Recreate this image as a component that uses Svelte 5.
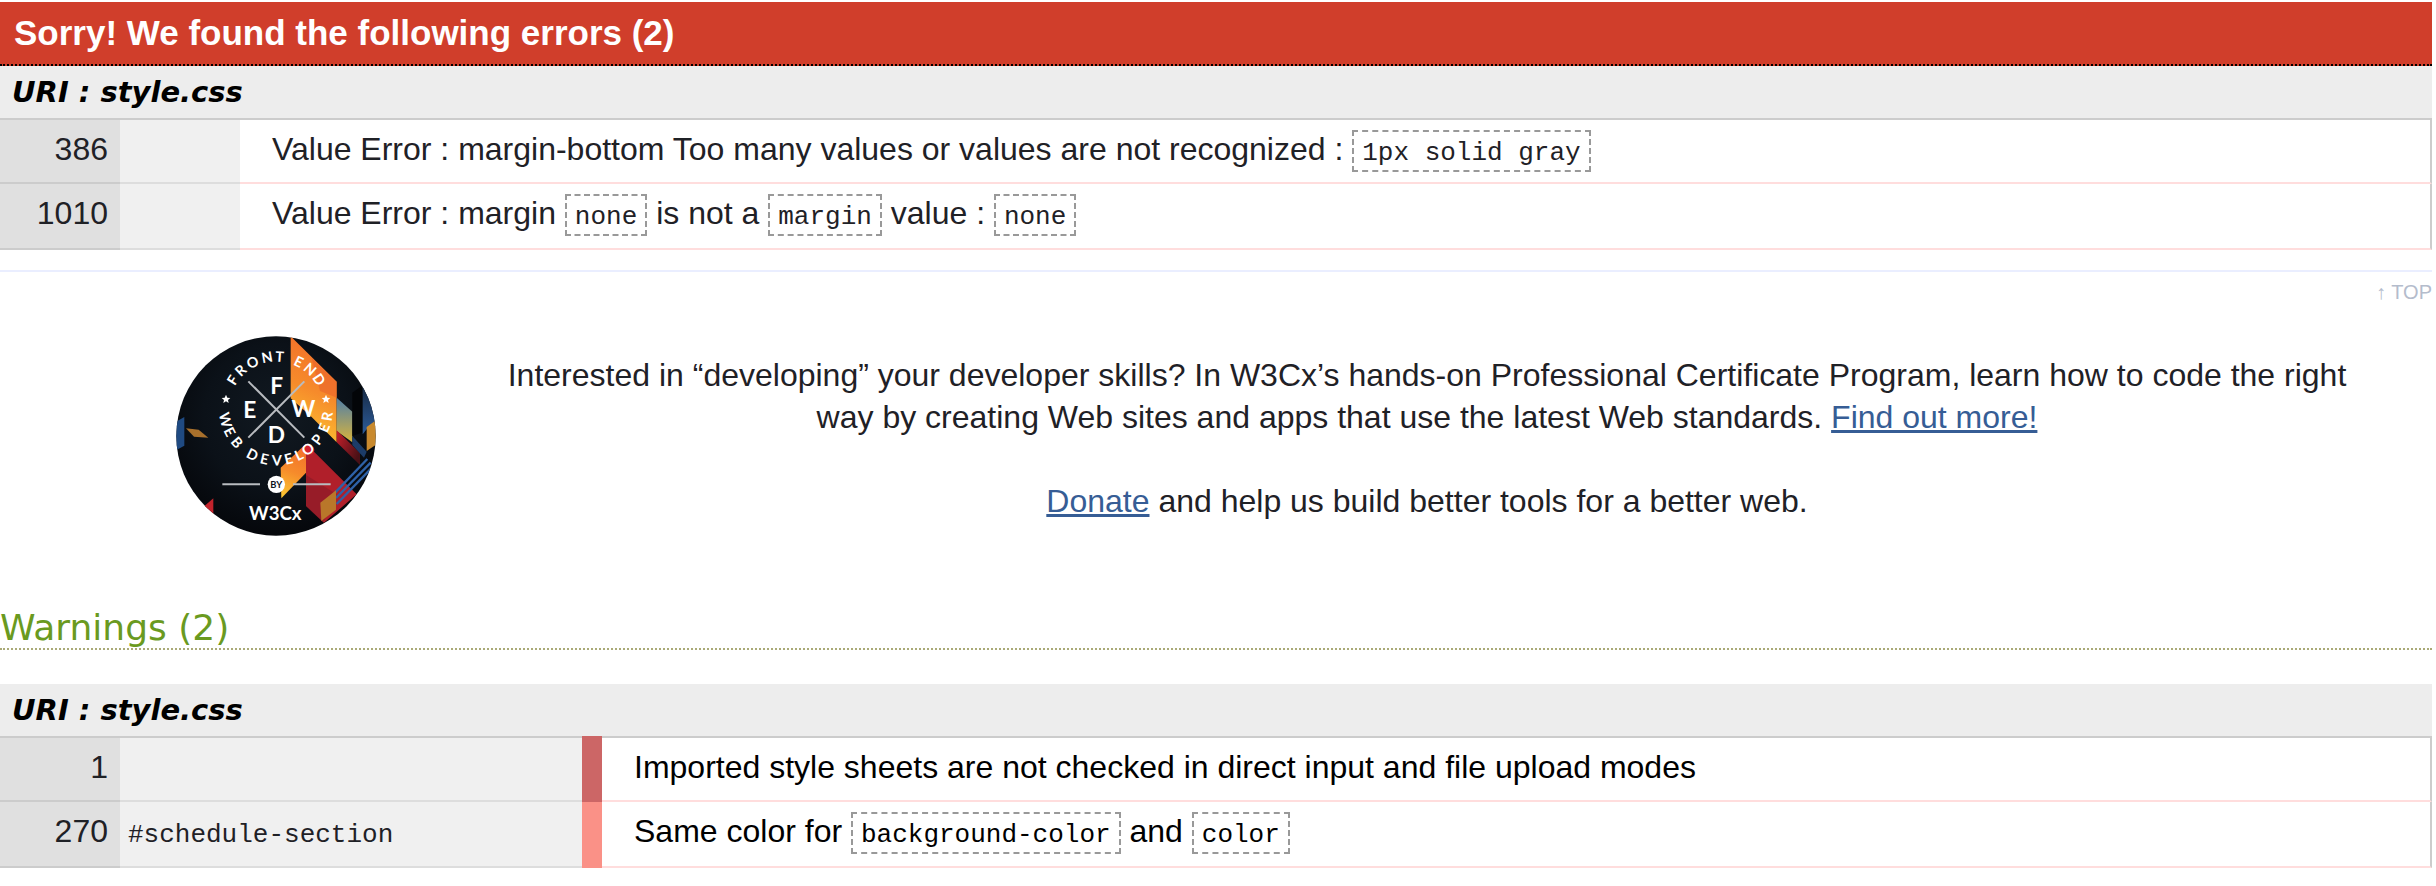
<script>
  const errors = [
    { line: 386, context: '', parts: ['Value Error : margin-bottom Too many values or values are not recognized : ', { code: '1px solid gray' }] },
    { line: 1010, context: '', parts: ['Value Error : margin ', { code: 'none' }, ' is not a ', { code: 'margin' }, ' value : ', { code: 'none' }] }
  ];
  const warnings = [
    { line: 1, context: '', level: 'high', parts: ['Imported style sheets are not checked in direct input and file upload modes'] },
    { line: 270, context: '#schedule-section', level: 'low', parts: ['Same color for ', { code: 'background-color' }, ' and ', { code: 'color' }] }
  ];

  // Badge lettering: each letter with its angle round the dial
  const upper = [['F', -57], ['R', -43], ['O', -27], ['N', -10], ['T', 4], ['E', 26], ['N', 41], ['D', 56]];
  const lower = [['W', 77], ['E', 63], ['B', 49], ['D', 27], ['E', 13], ['V', -1], ['E', -14], ['L', -26], ['O', -38], ['P', -53], ['E', -68], ['R', -81]];
</script>

{#snippet message(parts)}
  {#each parts as part}{#if part.code}<code class="boxed">{part.code}</code>{:else}{part}{/if}{/each}
{/snippet}

<main id="top">
  <section>
    <h2 class="error-title">Sorry! We found the following errors (2)</h2>
    <h3 class="uri">URI : style.css</h3>
    <table>
      <tbody>
        {#each errors as row}
          <tr>
            <td class="line">{row.line}</td>
            <td class="context">{row.context}</td>
            <td class="message">{@render message(row.parts)}</td>
          </tr>
        {/each}
      </tbody>
    </table>
  </section>

  <p class="back"><a href="#top">↑ TOP</a></p>

  <section class="promo">
    <svg class="badge" viewBox="48 45 600 600" role="img" aria-label="Front End Web Developer by W3Cx">
      <defs>
        <clipPath id="disc"><circle cx="348" cy="345" r="299" /></clipPath>
        <radialGradient id="night" cx="0.5" cy="0.4" r="0.6">
          <stop offset="0" stop-color="#111921" />
          <stop offset="0.6" stop-color="#0b1118" />
          <stop offset="1" stop-color="#05070b" />
        </radialGradient>
        <linearGradient id="flame" x1="0.5" y1="0" x2="0.3" y2="1">
          <stop offset="0" stop-color="#f26f2a" />
          <stop offset="0.5" stop-color="#f68b2b" />
          <stop offset="1" stop-color="#fcc531" />
        </linearGradient>
        <linearGradient id="steel" x1="0" y1="0" x2="0" y2="1">
          <stop offset="0" stop-color="#4f7ea8" />
          <stop offset="1" stop-color="#d9b53c" />
        </linearGradient>
        <linearGradient id="wine" x1="0" y1="0" x2="1" y2="0.6">
          <stop offset="0" stop-color="#c8202b" />
          <stop offset="1" stop-color="#4a1016" />
        </linearGradient>
        <linearGradient id="sea" x1="0" y1="0" x2="0" y2="1">
          <stop offset="0" stop-color="#16273f" />
          <stop offset="1" stop-color="#2c5b99" />
        </linearGradient>
      </defs>
      <g clip-path="url(#disc)">
        <rect x="48" y="45" width="600" height="600" fill="url(#night)" />
        <polygon points="48,302 73,288 73,374 48,388" fill="#1f4a82" />
        <polygon points="78,322 116,326 145,350 102,347" fill="#a8702c" />
        <polygon points="130,558 160,532 160,578 145,575" fill="#c3232c" />
        <polygon points="392,46 530,182 530,364 452,285 392,232" fill="url(#flame)" />
        <polygon points="455,110 530,182 530,230 480,210" fill="#e9642c" opacity="0.6" />
        <polygon points="530,230 577,272 577,364 530,330" fill="url(#steel)" />
        <polygon points="530,328 600,396 600,432 530,364" fill="url(#wine)" />
        <polygon points="577,215 605,195 620,330 577,345" fill="#030508" />
        <polygon points="608,190 650,240 650,310 620,325 608,340" fill="url(#sea)" />
        <polygon points="620,318 650,296 650,370 620,390" fill="#c98a2e" />
        <polygon points="577,345 620,392 612,410 577,372" fill="#1c3c68" />
        <polygon points="362,440 438,368 438,455 364,532" fill="url(#flame)" />
        <polygon points="438,368 590,520 492,605 438,555" fill="#b01f2a" />
        <polygon points="438,462 530,520 490,605 438,555" fill="#7e1a25" opacity="0.5" />
        <g stroke="#2e62a8" stroke-width="7">
          <path d="M526 514 L622 414" />
          <path d="M528 531 L632 425" />
          <path d="M530 549 L636 440" />
        </g>
        <polygon points="481,545 528,508 528,566 484,600" fill="#b9772a" />
        <g stroke="#b9bcc0" stroke-width="6">
          <path d="M265 181 L433 350" />
          <path d="M433 181 L265 350" />
          <path d="M187 490 H300" />
          <path d="M399 490 H512" />
        </g>
        <polygon points="198,221 202,230 211,231 204,237 206,246 198,241 190,246 192,237 185,231 194,230" fill="#fff" />
        <polygon points="498,221 502,230 511,231 504,237 506,246 498,241 490,246 492,237 485,231 494,230" fill="#fff" />
        <circle cx="448" cy="387" r="15" fill="#cf2030" />
        <circle cx="349" cy="490" r="26" fill="#fff" />
        <g class="dial">
          {#each upper as [letter, angle]}
            <text x="348" y="122" transform="rotate({angle} 348 262)">{letter}</text>
          {/each}
          {#each lower as [letter, angle]}
            <text x="348" y="433" transform="rotate({angle} 348 262)">{letter}</text>
          {/each}
        </g>
        <g class="initials">
          <text x="350" y="218">F</text>
          <text x="269" y="290">E</text>
          <text x="430" y="288">W</text>
          <text x="349" y="366">D</text>
        </g>
        <text class="by" x="349" y="500">BY</text>
        <text class="maker" x="346" y="598">W3Cx</text>
      </g>
    </svg>
    <div class="pitch">
      <p>Interested in “developing” your developer skills? In W3Cx’s hands-on Professional Certificate Program, learn how to code the right way by creating Web sites and apps that use the latest Web standards. <a href="#more">Find out more!</a></p>
      <p><a href="#donate">Donate</a> and help us build better tools for a better web.</p>
    </div>
  </section>

  <section>
    <h2 class="warning-title">Warnings (2)</h2>
    <h3 class="uri">URI : style.css</h3>
    <table class="warnings">
      <tbody>
        {#each warnings as row}
          <tr>
            <td class="line">{row.line}</td>
            <td class="context wide"><code>{row.context}</code></td>
            <td class="level {row.level}"></td>
            <td class="message">{@render message(row.parts)}</td>
          </tr>
        {/each}
      </tbody>
    </table>
  </section>
</main>

<style>
  :global(body) {
    background: #fff;
  }
  main {
    padding: 2px 4px 16px 0;
    font-family: "Liberation Sans", Arial, sans-serif;
    font-size: 32px;
    line-height: 42px;
    color: #1f2126;
  }
  h2, h3, p {
    margin: 0;
  }
  .error-title {
    padding: 10px 14px;
    border-bottom: 2px dotted #000;
    background: #d03e2b;
    color: #fff;
    font-size: 35px;
    line-height: 42px;
  }
  .uri {
    padding: 5px 12px;
    background: #ededed;
    color: #000;
    font: italic bold 29px/42px "DejaVu Sans", Verdana, sans-serif;
  }
  table {
    width: 100%;
    border-spacing: 0;
  }
  td {
    padding: 8px 0 14px;
    vertical-align: top;
    border-bottom: 2px solid #ddd;
  }
  tr:first-child td {
    padding-bottom: 12px;
    border-top: 2px solid #ccc;
  }
  td.line {
    width: 108px;
    padding-right: 12px;
    background: #e0e0e0;
    border-bottom-color: #ccc;
    text-align: right;
  }
  td.context {
    width: 112px;
    padding-left: 8px;
    background: #f0f0f0;
  }
  td.context.wide {
    width: 454px;
  }
  td.level,
  tr:first-child td.level {
    width: 20px;
    padding: 0;
    border: 0;
  }
  .high {
    background: #cc6666;
  }
  .low {
    background: #fa9187;
  }
  td.message {
    padding-left: 32px;
    border-right: 2px solid #ccc;
    border-bottom-color: #fdd;
  }
  .warnings .message {
    color: #000;
  }
  code {
    font-family: "Liberation Mono", "Courier New", monospace;
    font-size: 26px;
    line-height: 1;
  }
  .boxed {
    padding: 6px 8px 2px;
    border: 2px dashed #999;
  }
  .back {
    margin-top: 20px;
    border-top: 2px solid #eaeeff;
    font-size: 20px;
    line-height: 40px;
    text-align: right;
  }
  .back a {
    color: #b4bccc;
    text-decoration: none;
  }
  .promo {
    display: grid;
    grid-template-columns: 200px 1fr;
    column-gap: 126px;
    align-items: start;
    padding: 24px 80px 72px 176px;
  }
  .badge {
    display: block;
    width: 200px;
    height: 200px;
  }
  .badge text {
    font-family: Lato, sans-serif;
    font-weight: 700;
    fill: #fff;
    text-anchor: middle;
  }
  .badge .dial text {
    font-size: 43px;
  }
  .badge .initials text {
    font-size: 68px;
  }
  .badge .by {
    font-size: 28px;
    fill: #10161d;
  }
  .badge .maker {
    font-size: 56px;
  }
  .pitch {
    display: grid;
    row-gap: 42px;
    padding-top: 18px;
    text-align: center;
  }
  .pitch a {
    color: #365d95;
  }
  .warning-title {
    margin-bottom: 34px;
    border-bottom: 2px dotted #aaaa77;
    color: #6a9a1f;
    font: 36px/40px "DejaVu Sans", Verdana, sans-serif;
  }
</style>
